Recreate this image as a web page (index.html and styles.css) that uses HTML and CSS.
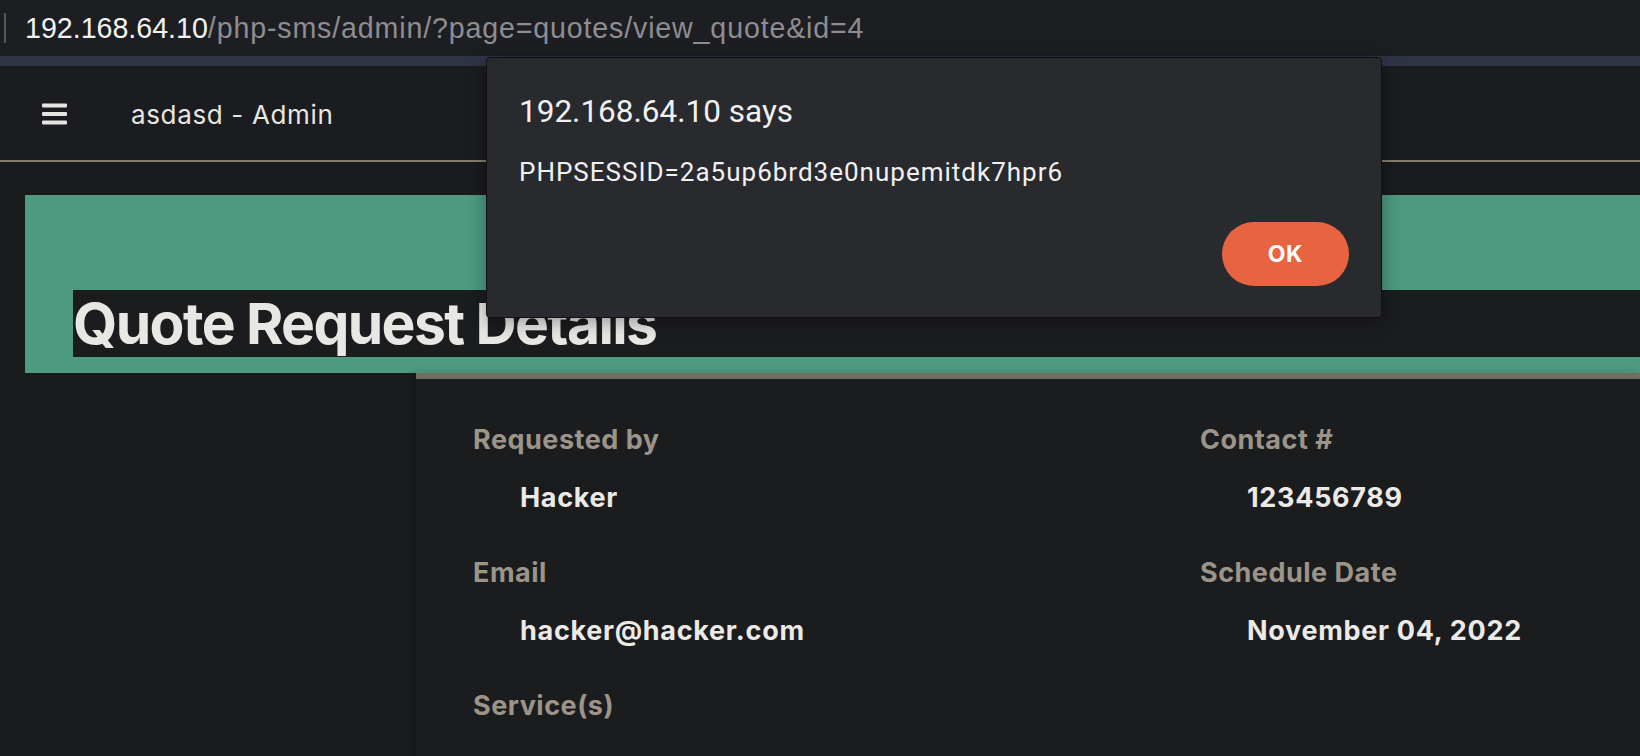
FILE: index.html
```html
<!DOCTYPE html>
<html lang="en">
<head>
<meta charset="utf-8">
<title>Quote Request Details</title>
<link rel="stylesheet" href="styles.css">
</head>
<body>
<div class="urlbar">
  <span class="caret"></span>
  <span class="host">192.168.64.10</span><span class="path">/php-sms/admin/?page=quotes/view_quote&amp;id=4</span>
</div>
<div class="tabstrip"></div>
<header class="navbar">
  <span class="burger" aria-label="menu">
    <svg width="25" height="22" viewBox="0 0 25 22"><rect x="0" y="0.5" width="25" height="4" rx="1" fill="#e6e4e0"/><rect x="0" y="9" width="25" height="4" rx="1" fill="#e6e4e0"/><rect x="0" y="17.5" width="25" height="4" rx="1" fill="#e6e4e0"/></svg>
  </span>
  <span class="brand">asdasd - Admin</span>
</header>
<main class="content">
  <section class="banner">
    <h1 class="title">Quote Request Details</h1>
  </section>
  <section class="card">
    <div class="grid">
      <div class="field">
        <div class="label">Requested by</div>
        <div class="value">Hacker</div>
      </div>
      <div class="field">
        <div class="label">Contact #</div>
        <div class="value">123456789</div>
      </div>
      <div class="field">
        <div class="label">Email</div>
        <div class="value">hacker@hacker.com</div>
      </div>
      <div class="field">
        <div class="label">Schedule Date</div>
        <div class="value">November 04, 2022</div>
      </div>
      <div class="field">
        <div class="label">Service(s)</div>
      </div>
    </div>
  </section>
</main>
<div class="dialog" role="alertdialog">
  <div class="dialog-title">192.168.64.10 says</div>
  <div class="dialog-msg">PHPSESSID=2a5up6brd3e0nupemitdk7hpr6</div>
  <div class="dialog-actions"><button class="ok">OK</button></div>
</div>
</body>
</html>
```
FILE: styles.css
```css
* { box-sizing: border-box; }
html, body { margin: 0; padding: 0; }
body {
  width: 1640px;
  height: 756px;
  overflow: hidden;
  background: #1a1b1d;
  font-family: Inter, "Liberation Sans", sans-serif;
  position: relative;
}
.urlbar {
  height: 56px;
  background: #1d1e22;
  display: flex;
  align-items: center;
  padding-left: 4px;
  font-family: "Liberation Sans", Arial, sans-serif;
  font-size: 28.6px;
}
.caret {
  width: 2px;
  height: 30px;
  background: #55565b;
  margin-right: 19px;
}
.host { color: #f2f2f3; }
.path { color: #8d8d92; letter-spacing: 0.85px; }
.tabstrip {
  height: 10px;
  background: #2f3346;
}
.navbar {
  height: 96px;
  background: #1b1c1f;
  border-bottom: 2px solid #857d70;
  display: flex;
  align-items: center;
  padding-left: 42px;
}
.burger { display: flex; width: 25px; height: 22px; margin-top: 2px; }
.brand {
  margin-left: 64px;
  color: #e8e6e3;
  font-size: 26px;
  letter-spacing: 0.65px;
  margin-top: 2px;
}
.content {
  padding-top: 33px;
}
.banner {
  margin-left: 25px;
  background: #4d9a80;
  padding: 95px 0 16px 48px;
}
.title {
  margin: 0;
  height: 67px;
  line-height: 67px;
  background: #1b1c1e;
  color: #e9e7e4;
  font-size: 57px;
  font-weight: 700;
  letter-spacing: -1.6px;
  white-space: nowrap;
}
.card {
  margin-left: 416px;
  background: #1b1c1e;
  border-top: 6px solid #736d62;
  box-shadow: -4px 0 8px rgba(0,0,0,0.15);
  padding: 45px 0 40px 57px;
  min-height: 400px;
}
.grid {
  display: grid;
  grid-template-columns: 727px 727px;
  row-gap: 43px;
}
.label {
  color: #9b9589;
  font-size: 27px;
  font-weight: 700;
  line-height: 32px;
  letter-spacing: 0.5px;
}
.value {
  color: #eceae7;
  font-size: 27px;
  font-weight: 700;
  line-height: 32px;
  margin-top: 26px;
  padding-left: 47px;
  letter-spacing: 0.7px;
}
.dialog {
  position: absolute;
  left: 486px;
  top: 57px;
  width: 896px;
  height: 261px;
  background: #292a2e;
  border: 1px solid #101012;
  border-radius: 4px;
  box-shadow: 0 4px 18px rgba(0,0,0,0.35);
  padding: 35px 32px 31px 32px;
  display: flex;
  flex-direction: column;
  font-family: Roboto, "Liberation Sans", sans-serif;
  color: #f1f1f2;
}
.dialog-title {
  font-size: 31.5px;
  line-height: 38px;
}
.dialog-msg {
  margin-top: 25px;
  font-size: 26px;
  line-height: 32px;
  letter-spacing: 1px;
}
.dialog-actions {
  margin-top: auto;
  display: flex;
  justify-content: flex-end;
}
.ok {
  width: 127px;
  height: 64px;
  border: none;
  border-radius: 32px;
  background: #e8633f;
  color: #ffffff;
  font-family: Inter, "Liberation Sans", sans-serif;
  font-size: 23px;
  font-weight: 700;
  letter-spacing: 0.5px;
}
```
